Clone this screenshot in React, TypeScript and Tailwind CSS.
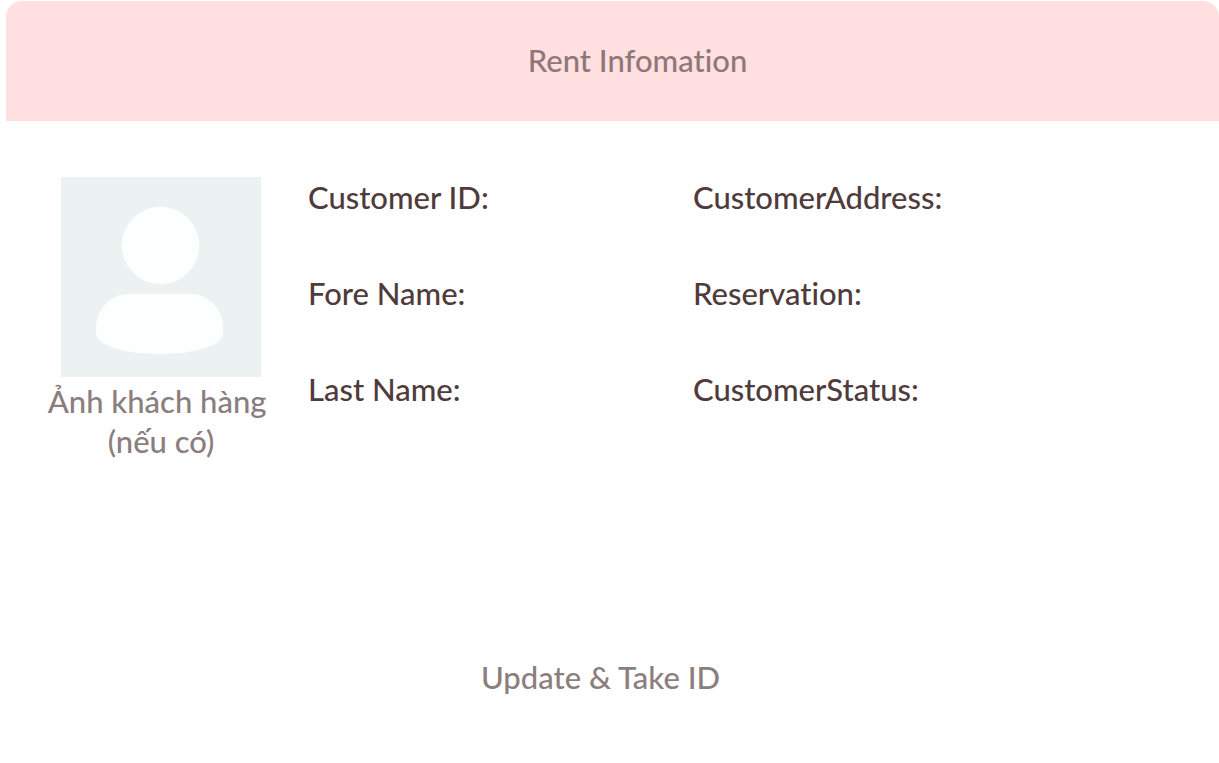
const columns = [
  [
    { id: 'customer-id', label: 'Customer ID:' },
    { id: 'fore-name', label: 'Fore Name:' },
    { id: 'last-name', label: 'Last Name:' },
  ],
  [
    { id: 'customer-address', label: 'CustomerAddress:' },
    { id: 'reservation', label: 'Reservation:' },
    { id: 'customer-status', label: 'CustomerStatus:' },
  ],
];

function Avatar() {
  return (
    <svg viewBox="0 0 200 200" className="size-[200px]" aria-hidden="true">
      <rect width="200" height="200" fill="#ecf2f2" />
      <circle cx="99.5" cy="68.5" r="38.7" fill="#fbfffe" />
      <path
        d="M67 117H130C148 117 162 133 162 151V156C162 168 136 177 99 177C61 177 35 168 35 156V151C35 133 49 117 67 117Z"
        fill="#fbfffe"
      />
    </svg>
  );
}

function Field({ id, label }: { id: string; label: string }) {
  return (
    <div className="flex h-10 items-center gap-3">
      <label htmlFor={id} className="shrink-0">
        {label}
      </label>
      <input id={id} type="text" className="w-full min-w-0 bg-transparent outline-none" />
    </div>
  );
}

export default function App() {
  return (
    <main className="min-h-screen bg-white pt-px pl-1.5 font-[Lato,'Noto_Sans',sans-serif] text-[31px] leading-10 font-medium text-[#4f3b3b] [font-variant-ligatures:none]">
      <header className="flex h-[120px] items-center justify-center rounded-t-2xl bg-[#ffdfe0] pb-0.5 pl-[50px]">
        <h1 className="font-medium text-[#907777]">Rent Infomation</h1>
      </header>
      <form>
        <div className="flex gap-6 pt-14 pl-8">
          <figure className="flex w-[246px] shrink-0 flex-col items-center">
            <Avatar />
            <figcaption className="pt-1 text-center whitespace-nowrap text-[#8b7e7e]">
              Ảnh khách hàng&nbsp;
              <br />
              (nếu có)
            </figcaption>
          </figure>
          <div className="flex grow">
            {columns.map((fields, index) => (
              <div key={index} className={index === 0 ? 'flex w-[385px] shrink-0 flex-col gap-14' : 'flex min-w-0 grow flex-col gap-14'}>
                {fields.map((field) => (
                  <Field key={field.id} {...field} />
                ))}
              </div>
            ))}
          </div>
        </div>
        <div className="flex justify-center pt-49 pr-6">
          <button type="button" className="text-[#8b7e7e]">
            Update &amp; Take ID
          </button>
        </div>
      </form>
    </main>
  );
}
